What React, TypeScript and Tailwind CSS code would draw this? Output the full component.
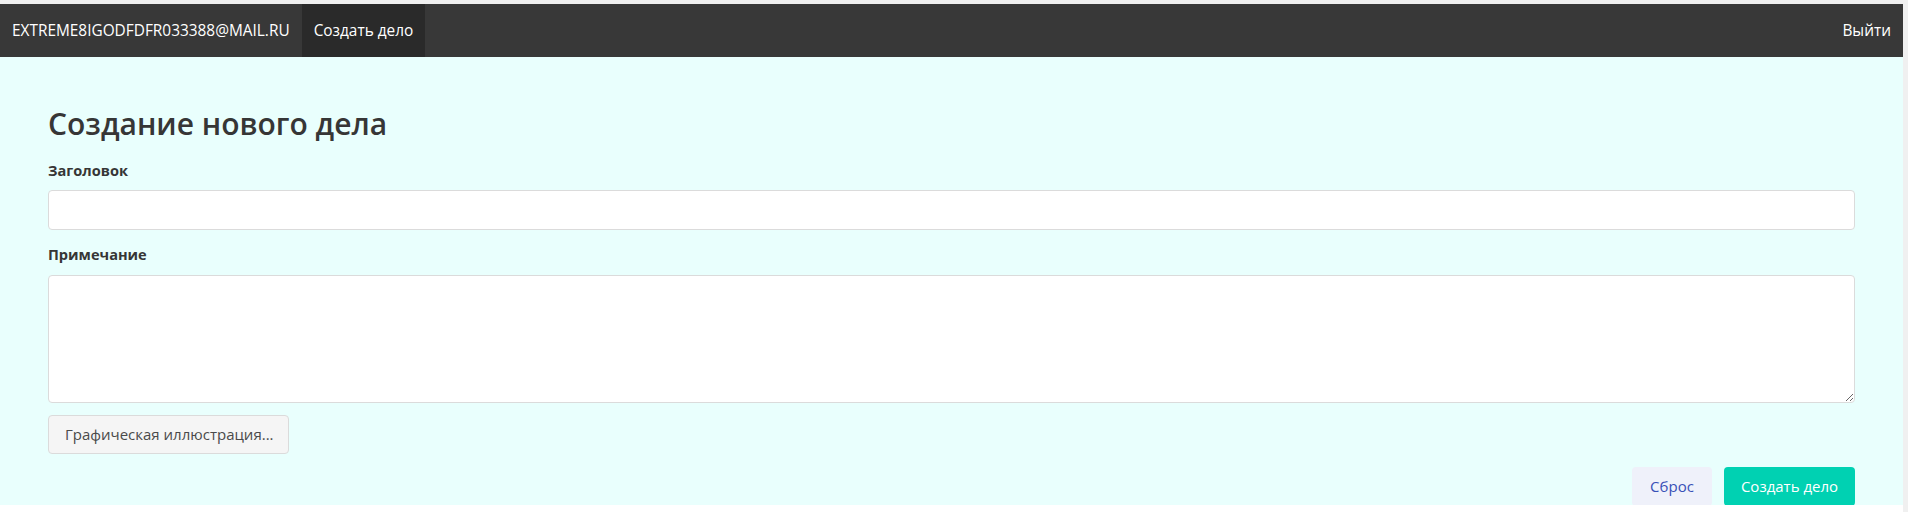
export default function App() {
  return (
    <div className="h-[512px] w-full flex flex-col bg-white font-['Open_Sans',sans-serif] overflow-hidden">
      <div className="h-[4px] bg-[#f0f0f0]" />
      <div className="flex flex-1">
        <div className="flex-1 flex flex-col">
          <nav className="h-[53px] bg-[#383838] flex items-stretch text-white text-[15.4px]">
            <div className="px-[12px] flex items-center">EXTREME8IGODFDFR033388@MAIL.RU</div>
            <div className="px-[12px] flex items-center bg-[#2a2a2a]">Создать дело</div>
            <div className="flex-1" />
            <div className="px-[12px] flex items-center">Выйти</div>
          </nav>
          <main className="h-[448px] bg-[#e9fffd] px-[48px] pt-[49px]">
            <h1 className="text-[30px] leading-[36px] font-semibold text-[#363636]">Создание нового дела</h1>
            <label className="block mt-[18px] text-[14.6px] leading-[20px] font-bold text-[#363636]">Заголовок</label>
            <input type="text" className="block mt-[10px] w-full h-[40px] bg-white border border-[#dbdbdb] rounded-[4px]" />
            <label className="block mt-[14px] text-[14.6px] leading-[20px] font-bold text-[#363636]">Примечание</label>
            <textarea className="block mt-[11px] w-full h-[128px] bg-white border border-[#dbdbdb] rounded-[4px]" />
            <button className="block mt-[12px] h-[39px] w-[241px] bg-[#f5f5f5] border border-[#dbdbdb] rounded-[4px] text-[15px] text-[#4a4a4a] text-left pl-[16px]">
              Графическая иллюстрация...
            </button>
            <div className="flex justify-end gap-[12px] mt-[13px]">
              <button className="h-[39px] w-[80px] rounded-[4px] bg-[#eff1fa] text-[#3850b7] text-[15px]">Сброс</button>
              <button className="h-[39px] w-[131px] rounded-[4px] bg-[#00d1b2] text-white text-[15px]">Создать дело</button>
            </div>
          </main>
          <div className="flex-1 bg-white" />
        </div>
        <div className="w-[5px] bg-[#f0f0f0]" />
      </div>
    </div>
  );
}
